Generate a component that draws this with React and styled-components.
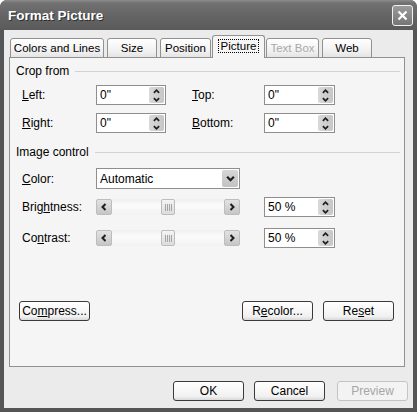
import styled, { createGlobalStyle } from "styled-components";

const GlobalStyle = createGlobalStyle`
  html, body { margin: 0; padding: 0; background: #fff; }
  body {
    font-family: "Liberation Sans", Arial, sans-serif;
    font-size: 12px;
    color: #000;
  }
`;

const Window = styled.div`
  width: 417px;
  height: 412px;
  display: flex;
  flex-direction: column;
  background: #555;
  border-radius: 7px 7px 0 0;
  overflow: hidden;
`;

const TitleBar = styled.div`
  flex: none;
  height: 30px;
  display: flex;
  align-items: center;
  justify-content: space-between;
  padding: 0 4px 0 8px;
  background: linear-gradient(#8c8c8c 0, #717171 3px, #666 45%, #5a5a5a 100%);
`;

const Title = styled.div`
  color: #fff;
  font-weight: bold;
  font-size: 13.5px;
  text-shadow: 1px 1px 0 #2e2e2e;
`;

const CloseBtn = styled.div`
  width: 21px;
  height: 21px;
  box-sizing: border-box;
  border: 1px solid #f2f2f2;
  border-radius: 3px;
  background: linear-gradient(#9a9a9a, #767676);
  display: flex;
  align-items: center;
  justify-content: center;
`;

const Content = styled.div`
  flex: 1;
  margin: 0 4px 4px;
  background: #ebebeb;
  padding: 6px 5px 0;
  display: flex;
  flex-direction: column;
`;

const TabRow = styled.div`
  display: flex;
  align-items: flex-end;
  gap: 3px;
  padding-left: 1px;
  height: 22px;
  position: relative;
  z-index: 1;
  margin-bottom: -1px;
`;

const Tab = styled.div`
  width: ${(p) => p.$w}px;
  box-sizing: border-box;
  height: ${(p) => (p.$active ? 23 : 20)}px;
  margin: ${(p) => (p.$active ? "0 -2px" : "0")};
  border: 1px solid #919191;
  border-bottom: ${(p) => (p.$active ? "none" : "1px solid #919191")};
  border-radius: 3px 3px 0 0;
  background: ${(p) =>
    p.$active ? "#f5f5f5" : "linear-gradient(#ffffff, #f0f0f0 70%, #e4e4e4)"};
  color: ${(p) => (p.$disabled ? "#a9a9a9" : "#000")};
  font-size: 11.5px;
  white-space: nowrap;
  display: flex;
  align-items: center;
  justify-content: center;
  padding-bottom: ${(p) => (p.$active ? 3 : 0)}px;
`;

const Focus = styled.span`
  border: 1px dotted #000;
  padding: 0 2px;
`;

const Panel = styled.div`
  height: 310px;
  box-sizing: border-box;
  margin-right: 3px;
  border: 1px solid #919191;
  background: #f5f5f5;
  padding: 6px 0 0;
  display: flex;
  flex-direction: column;
`;

const Legend = styled.div`
  display: flex;
  align-items: center;
  gap: 6px;
  height: 14px;
  margin: ${(p) => p.$top || 0}px 4px 0 6px;
  color: #000;

  &::after {
    content: "";
    flex: 1;
    height: 1px;
    background: #d2d2d2;
  }
`;

const Row = styled.div`
  display: flex;
  align-items: center;
  height: ${(p) => p.$h || 20}px;
  margin-top: ${(p) => p.$top}px;
  padding-left: 12px;
`;

const Label = styled.div`
  width: ${(p) => p.$w}px;
  margin-left: ${(p) => p.$ml || 0}px;
  flex: none;
`;

const SpinBox = styled.div`
  width: ${(p) => p.$w}px;
  height: 20px;
  box-sizing: border-box;
  border: 1px solid #8e8e8e;
  background: #fff;
  display: flex;
  align-items: stretch;
`;

const Value = styled.div`
  flex: 1;
  display: flex;
  align-items: center;
  padding-left: 3px;
`;

const SpinButtons = styled.div`
  width: 15px;
  margin: 1px;
  border-radius: 2px;
  background: linear-gradient(90deg, #d9d9d9, #c6c6c6);
  display: flex;
  flex-direction: column;
  align-items: center;
  justify-content: center;
  gap: 1px;
`;

const Select = styled.div`
  width: 144px;
  height: 21px;
  box-sizing: border-box;
  border: 1px solid #8e8e8e;
  background: #fff;
  display: flex;
  align-items: stretch;
`;

const DropBtn = styled.div`
  width: 16px;
  margin: 1px;
  border-radius: 2px;
  background: linear-gradient(#d6d6d6, #c2c2c2);
  display: flex;
  align-items: center;
  justify-content: center;
`;

const Slider = styled.div`
  width: 144px;
  height: 16px;
  display: flex;
`;

const ArrowBtn = styled.div`
  width: 16px;
  height: 16px;
  flex: none;
  box-sizing: border-box;
  border: 1px solid #bdbdbd;
  border-radius: 2px;
  background: linear-gradient(#e2e2e2, #c6c6c6);
  display: flex;
  align-items: center;
  justify-content: center;
`;

const Track = styled.div`
  flex: 1;
  background: linear-gradient(#efefef, #fbfbfb 40%, #f2f2f2);
  display: flex;
  justify-content: center;
`;

const Thumb = styled.div`
  width: 14px;
  height: 16px;
  box-sizing: border-box;
  border: 1px solid #bdbdbd;
  border-radius: 2px;
  background: linear-gradient(#f4f4f4, #dcdcdc);
  display: flex;
  align-items: center;
  justify-content: center;
  gap: 1px;

  span {
    width: 1px;
    height: 7px;
    background: #a4a4a4;
  }
`;

const ButtonRow = styled.div`
  display: flex;
  justify-content: space-between;
  margin: 53px 10px 0 9px;
`;

const Group = styled.div`
  display: flex;
  gap: 10px;
`;

const Button = styled.div`
  width: 71px;
  height: 20px;
  box-sizing: border-box;
  border: 1px solid ${(p) => (p.$disabled ? "#c4c4c4" : "#3a3a3a")};
  border-radius: 3px;
  background: ${(p) =>
    p.$disabled ? "#f3f3f3" : "linear-gradient(#ffffff, #f1f1f1 80%, #d8d8d8)"};
  color: ${(p) => (p.$disabled ? "#a6a6a6" : "#000")};
  display: flex;
  align-items: center;
  justify-content: center;
  margin-left: ${(p) => p.$ml || 0}px;
`;

const Footer = styled.div`
  display: flex;
  justify-content: flex-end;
  gap: 10px;
  margin-top: 14px;
`;

const Chevron = ({ dir, size = 8 }) => {
  const paths = {
    up: "M1 5.5 L4 2.5 L7 5.5",
    down: "M1 2.5 L4 5.5 L7 2.5",
    left: "M5.5 1 L2.5 4 L5.5 7",
    right: "M2.5 1 L5.5 4 L2.5 7",
  };
  return (
    <svg width={size} height={size} viewBox="0 0 8 8">
      <path d={paths[dir]} fill="none" stroke="#1e1e1e" strokeWidth="2" />
    </svg>
  );
};

const Spin = ({ value, w }) => (
  <SpinBox $w={w}>
    <Value>{value}</Value>
    <SpinButtons>
      <Chevron dir="up" size={7} />
      <Chevron dir="down" size={7} />
    </SpinButtons>
  </SpinBox>
);

const SliderCtl = () => (
  <Slider>
    <ArrowBtn>
      <Chevron dir="left" />
    </ArrowBtn>
    <Track>
      <Thumb>
        <span />
        <span />
        <span />
        <span />
      </Thumb>
    </Track>
    <ArrowBtn>
      <Chevron dir="right" />
    </ArrowBtn>
  </Slider>
);

const tabs = [
  { name: "Colors and Lines", w: 94 },
  { name: "Size", w: 50 },
  { name: "Position", w: 51 },
  { name: "Picture", w: 53, active: true },
  { name: "Text Box", w: 53, disabled: true },
  { name: "Web", w: 50 },
];

export default function App() {
  return (
    <>
      <GlobalStyle />
      <Window>
        <TitleBar>
          <Title>Format Picture</Title>
          <CloseBtn>
            <svg width="11" height="11" viewBox="0 0 11 11">
              <path d="M1.5 1.5 L9.5 9.5 M9.5 1.5 L1.5 9.5" stroke="#fff" strokeWidth="2.2" />
            </svg>
          </CloseBtn>
        </TitleBar>
        <Content>
          <TabRow>
            {tabs.map((t) => (
              <Tab key={t.name} $w={t.w} $active={t.active} $disabled={t.disabled}>
                {t.active ? <Focus>{t.name}</Focus> : t.name}
              </Tab>
            ))}
          </TabRow>
          <Panel>
            <Legend>Crop from</Legend>
            <Row $top={7}>
              <Label $w={74}>
                <u>L</u>eft:
              </Label>
              <Spin value={'0"'} w={70} />
              <Label $w={72} $ml={26}>
                <u>T</u>op:
              </Label>
              <Spin value={'0"'} w={71} />
            </Row>
            <Row $top={8}>
              <Label $w={74}>
                <u>R</u>ight:
              </Label>
              <Spin value={'0"'} w={70} />
              <Label $w={72} $ml={26}>
                <u>B</u>ottom:
              </Label>
              <Spin value={'0"'} w={71} />
            </Row>
            <Legend $top={12}>Image control</Legend>
            <Row $top={9} $h={21}>
              <Label $w={74}>
                <u>C</u>olor:
              </Label>
              <Select>
                <Value>Automatic</Value>
                <DropBtn>
                  <Chevron dir="down" size={9} />
                </DropBtn>
              </Select>
            </Row>
            <Row $top={8}>
              <Label $w={74}>
                Brig<u>h</u>tness:
              </Label>
              <SliderCtl />
              <Label $w={24} />
              <Spin value="50 %" w={71} />
            </Row>
            <Row $top={11}>
              <Label $w={74}>
                Co<u>n</u>trast:
              </Label>
              <SliderCtl />
              <Label $w={24} />
              <Spin value="50 %" w={71} />
            </Row>
            <ButtonRow>
              <Button>
                Co<u>m</u>press...
              </Button>
              <Group>
                <Button>
                  R<u>e</u>color...
                </Button>
                <Button>
                  Re<u>s</u>et
                </Button>
              </Group>
            </ButtonRow>
          </Panel>
          <Footer>
            <Button>OK</Button>
            <Button>Cancel</Button>
            <Button $disabled $ml={2}>
              Preview
            </Button>
          </Footer>
        </Content>
      </Window>
    </>
  );
}
